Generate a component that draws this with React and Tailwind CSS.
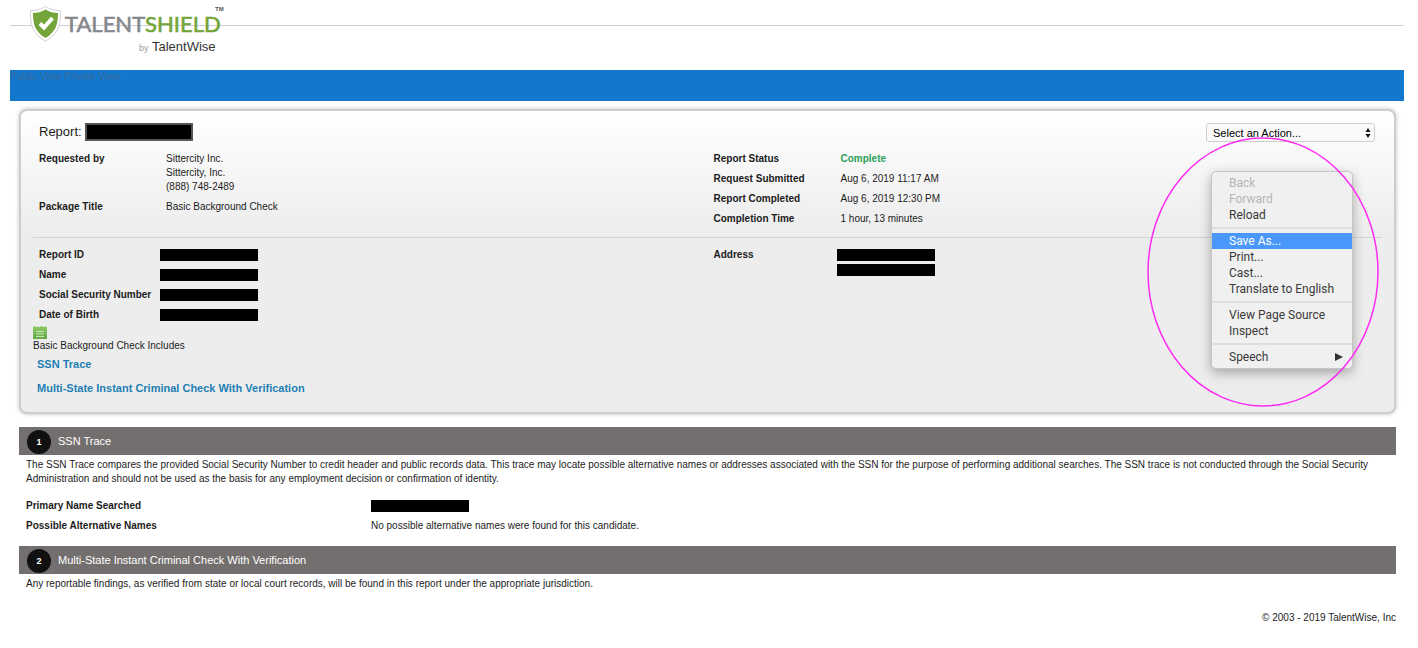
import { clsx } from "clsx"

const requestDetails = [
  { label: "Requested by", lines: ["Sittercity Inc.", "Sittercity, Inc.", "(888) 748-2489"] },
  { label: "Package Title", lines: ["Basic Background Check"] },
]

const statusDetails = [
  { label: "Report Status", lines: ["Complete"], highlight: true },
  { label: "Request Submitted", lines: ["Aug 6, 2019 11:17 AM"] },
  { label: "Report Completed", lines: ["Aug 6, 2019 12:30 PM"] },
  { label: "Completion Time", lines: ["1 hour, 13 minutes"] },
]

const candidateFields = ["Report ID", "Name", "Social Security Number", "Date of Birth"]

const menuGroups = [
  [
    { label: "Back", disabled: true },
    { label: "Forward", disabled: true },
    { label: "Reload" },
  ],
  [
    { label: "Save As...", active: true },
    { label: "Print..." },
    { label: "Cast..." },
    { label: "Translate to English" },
  ],
  [{ label: "View Page Source" }, { label: "Inspect" }],
  [{ label: "Speech", submenu: true }],
]

export default function App() {
  return (
    <div className="bg-white pr-[14px] pb-6 pl-[10px] font-['Liberation_Sans',Arial,sans-serif] text-[10px] leading-[14px] text-[#1c1c1c]">
      <header className="relative h-[70px]">
        <hr className="absolute inset-x-0 top-[25px] border-[#cfcfcf]" />
        <Logo />
      </header>

      <nav className="h-[31px] bg-[#1278ce] text-[#38699a]">
        <a href="#public">Public View</a> <a href="#private">Private View</a>
      </nav>

      <main className="mr-2 ml-[9px] pt-2">
        <ReportCard />

        <ReportSection number={1} title="SSN Trace">
          <p>
            The SSN Trace compares the provided Social Security Number to credit header and public records data. This
            trace may locate possible alternative names or addresses associated with the SSN for the purpose of
            performing additional searches. The SSN trace is not conducted through the Social Security Administration
            and should not be used as the basis for any employment decision or confirmation of identity.
          </p>
          <dl className="mt-[10px] grid grid-cols-[345px_1fr]">
            <dt className="py-[3px] font-bold">Primary Name Searched</dt>
            <dd className="py-[3px]">
              <Redacted />
            </dd>
            <dt className="py-[3px] font-bold">Possible Alternative Names</dt>
            <dd className="py-[3px]">No possible alternative names were found for this candidate.</dd>
          </dl>
        </ReportSection>

        <ReportSection number={2} title="Multi-State Instant Criminal Check With Verification">
          <p>
            Any reportable findings, as verified from state or local court records, will be found in this report under
            the appropriate jurisdiction.
          </p>
        </ReportSection>

        <footer className="mt-5 text-right">© 2003 - 2019 TalentWise, Inc</footer>
      </main>
    </div>
  )
}

function Logo() {
  return (
    <svg className="absolute top-0 left-[18px]" width="200" height="60" viewBox="0 0 200 60" aria-label="TalentShield">
      <path
        d="M17.500 6.500C13 9.500 7.500 10.500 2.500 10.500C2 23 4 34 17.500 41C31 34 33 23 32.500 10.500C27.500 10.500 22 9.500 17.500 6.500Z"
        fill="#fff"
        stroke="#d2d2d2"
      />
      <path
        d="M17.500 9.500C13.500 12 9.500 13 5 13C5 24 7 32 17.500 38C28 32 30 24 30 13C25.500 13 21.500 12 17.500 9.500Z"
        fill="#74a53a"
      />
      <path d="M12 23.500L16 27.500L24.500 18" fill="none" stroke="#fff" strokeWidth="4" />
      <text
        x="37"
        y="32"
        fontFamily="Lato, sans-serif"
        fontSize="22"
        fill="#85888d"
        stroke="#85888d"
        strokeWidth="0.6"
      >
        TALENT
        <tspan fill="#74a53a" stroke="#74a53a">
          SHIELD
        </tspan>
      </text>
      <text x="187" y="11" fontFamily="Liberation Sans, sans-serif" fontSize="6" fontWeight="700" fill="#555">
        TM
      </text>
      <text x="111" y="51" fontFamily="Liberation Sans, sans-serif" fontSize="9" fill="#9a9a9a">
        by
      </text>
      <text x="124" y="51" fontFamily="Liberation Sans, sans-serif" fontSize="13" fill="#333">
        TalentWise
      </text>
    </svg>
  )
}

function ReportCard() {
  return (
    <section className="relative mb-[13px] rounded-lg border-2 border-[#cdcdcd] bg-[#ededed] bg-linear-to-b from-white from-0% to-[#ededed] to-[120px] px-3 pt-3 pb-[11px] shadow-[0_0_4px_rgba(0,0,0,0.25)]">
      <div className="flex items-start justify-between pr-[7px] pl-[6px]">
        <h1 className="flex items-start text-[13px] leading-[18px]">
          <span>Report:</span>
          <span className="ml-[3px] h-[18px] w-[108px] border-2 border-[#555] bg-black" />
        </h1>
        <ActionSelect />
      </div>

      <div className="mt-[7px] grid grid-cols-2 border-b border-[#d2d2d2] pb-2">
        <DetailList items={requestDetails} />
        <DetailList items={statusDetails} />
      </div>

      <div className="grid grid-cols-2 pt-[7px]">
        <dl className="px-[6px]">
          {candidateFields.map((field) => (
            <div key={field} className="grid grid-cols-[121px_1fr] items-center py-[3px]">
              <dt className="font-bold">{field}</dt>
              <dd>
                <Redacted />
              </dd>
            </div>
          ))}
        </dl>
        <dl className="px-[6px]">
          <div className="grid grid-cols-[123px_1fr] items-start py-[3px]">
            <dt className="font-bold">Address</dt>
            <dd className="space-y-px">
              <Redacted />
              <Redacted />
            </dd>
          </div>
        </dl>
      </div>

      <NotepadIcon />
      <p>Basic Background Check Includes</p>
      <ul className="pl-1 text-[11px] font-bold text-[#1d7fb3]">
        <li className="py-1">
          <a href="#section-1">SSN Trace</a>
        </li>
        <li className="py-[6px]">
          <a href="#section-2">Multi-State Instant Criminal Check With Verification</a>
        </li>
      </ul>

      <ContextMenu />
      <svg className="pointer-events-none absolute top-[25px] right-[14px]" width="234" height="272" viewBox="0 0 234 272">
        <ellipse cx="117" cy="136" rx="115" ry="134" fill="none" stroke="#ff2bf5" strokeWidth="1.5" />
      </svg>
    </section>
  )
}

function ActionSelect() {
  return (
    <div className="relative">
      <select
        aria-label="Select an Action"
        className="block h-[19px] w-[169px] appearance-none rounded-[3px] border border-[#cfcfcf] bg-[#fafafa] px-[6px] text-[11px] leading-4 text-black"
      >
        <option>Select an Action...</option>
      </select>
      <svg className="pointer-events-none absolute top-[5px] right-1" width="6" height="10" viewBox="0 0 6 10">
        <path d="M3 0L5.500 4H0.500ZM3 10L5.500 6H0.500Z" fill="#111" />
      </svg>
    </div>
  )
}

function DetailList({ items }) {
  return (
    <dl className="px-[6px]">
      {items.map((item) => (
        <div key={item.label} className="grid grid-cols-[127px_1fr] py-[3px]">
          <dt className="font-bold">{item.label}</dt>
          <dd className={clsx(item.highlight && "font-bold text-[#2c9f5b]")}>
            {item.lines.map((line) => (
              <div key={line}>{line}</div>
            ))}
          </dd>
        </div>
      ))}
    </dl>
  )
}

function Redacted() {
  return (
    <div className="flex h-[14px] items-center">
      <span className="h-3 w-[98px] bg-black" />
    </div>
  )
}

function NotepadIcon() {
  return (
    <svg className="block" width="14" height="14" viewBox="0 0 14 14" aria-hidden="true">
      <defs>
        <linearGradient id="notepad" x1="0" y1="0" x2="0" y2="1">
          <stop offset="0" stopColor="#8ccb62" />
          <stop offset="1" stopColor="#62a846" />
        </linearGradient>
      </defs>
      <path d="M0 2H1V1H2V2H4V1H5V2H7V1H8V2H9V1H10V2H12V1H13V2H14V14H0Z" fill="url(#notepad)" />
      <path d="M3 6.500H11M3 9H11M3 11.500H11" stroke="#c4e6ae" />
    </svg>
  )
}

function ContextMenu() {
  return (
    <div
      role="menu"
      className="absolute top-[60px] right-[41px] w-[142px] rounded-[5px] border border-[#c6c6c6] bg-[#f0f0f0] py-[3px] font-[Roboto,sans-serif] text-[12px] leading-4 text-[#3a3a3a] shadow-[0_4px_12px_rgba(0,0,0,0.3)]"
    >
      {menuGroups.map((group, index) => (
        <div key={group[0].label} className={clsx(index > 0 && "mt-1 border-t-2 border-[#dedede] pt-1")}>
          {group.map((item) => (
            <button
              key={item.label}
              role="menuitem"
              disabled={item.disabled}
              className={clsx(
                "flex w-full items-center justify-between pr-[9px] pl-[17px] text-left",
                item.disabled && "text-[#b5b5b5]",
                item.active && "bg-[#4a98fc] text-white"
              )}
            >
              {item.label}
              {item.submenu && (
                <svg width="8" height="8" viewBox="0 0 8 8">
                  <path d="M0 0L8 4L0 8Z" fill="#333" />
                </svg>
              )}
            </button>
          ))}
        </div>
      ))}
    </div>
  )
}

function ReportSection({ number, title, children }) {
  return (
    <section id={`section-${number}`} className="mt-[10px]">
      <h2 className="flex h-7 items-center bg-[#736f6e] pl-2 text-[11px] text-white">
        <span className="mt-[2px] grid h-6 w-6 place-items-center rounded-full bg-[#111] text-[9px] font-bold">
          {number}
        </span>
        <span className="ml-[7px]">{title}</span>
      </h2>
      <div className="px-[7px] pt-[3px]">{children}</div>
    </section>
  )
}
